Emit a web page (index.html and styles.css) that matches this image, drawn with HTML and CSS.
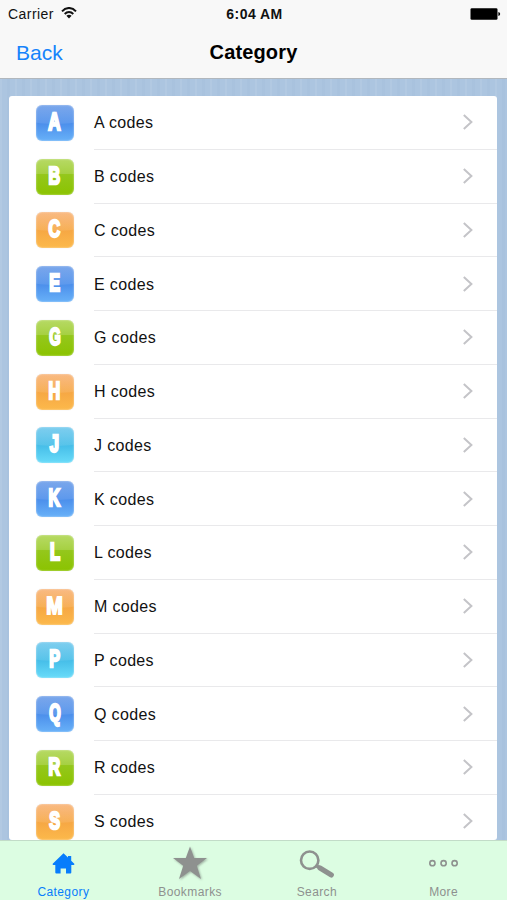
FILE: index.html
```html
<!DOCTYPE html>
<html lang="en">
<head>
<meta charset="utf-8">
<title>Category</title>
<link rel="stylesheet" href="styles.css">
</head>
<body>
<div class="app">
  <header class="header">
    <div class="status">
      <div class="carrier"><span>Carrier</span>
        <svg width="16" height="12" viewBox="0 0 16 12" fill="none" stroke="#111" stroke-width="1.9"><path d="M1 4.3C5-.2 11-.2 15 4.3M3.7 7C6.2 4.4 9.8 4.4 12.3 7"/><path d="M8 11.6 5.4 8.8Q8 6.7 10.6 8.8Z" fill="#111" stroke="none"/></svg>
      </div>
      <div class="clock">6:04 AM</div>
      <svg class="battery" width="31" height="12" viewBox="0 0 31 12"><rect x=".5" y=".3" width="27" height="11.4" rx="1.3"/><path d="M28.4 4Q30.2 4.3 30.2 6T28.4 8Z"/></svg>
    </div>
    <nav class="nav"><a class="back">Back</a><h1 class="title">Category</h1><span></span></nav>
  </header>
  <main class="main">
    <ul class="list" id="codes"></ul>
  </main>
  <footer class="tabs">
    <div class="tab active">
      <div class="icon"><svg width="40" height="36" viewBox="0 0 40 36" fill="currentColor"><path d="M20.5 8.2 9.7 18.8Q9.3 20 10.5 20H12.3V27.5Q12.3 28.5 13.3 28.5H17.6V23.6H23V28.5H27.3Q28.3 28.5 28.3 27.5V20H30.5Q31.7 20 31.3 18.8L28.2 15.7V11H25V12.6Z"/></svg></div>
      <span>Category</span>
    </div>
    <div class="tab">
      <div class="icon"><svg class="star" width="40" height="36" viewBox="0 0 40 36" fill="currentColor"><path d="M20 1.5 24.2 13H37L26.8 20.8 31 34 20 26 9 34 13.2 20.8 3 13H15.8Z"/></svg></div>
      <span>Bookmarks</span>
    </div>
    <div class="tab">
      <div class="icon"><svg width="40" height="36" viewBox="0 0 40 36" fill="none" stroke="currentColor"><circle cx="12.7" cy="15.2" r="8.7" stroke-width="2.6"/><path d="M19 20.5 23 23" stroke-width="3.4"/><path d="M23 23 34.4 30" stroke-width="5" stroke-linecap="round"/></svg></div>
      <span>Search</span>
    </div>
    <div class="tab">
      <div class="icon"><svg width="40" height="36" viewBox="0 0 40 36" fill="none" stroke="currentColor" stroke-width="1.6"><circle cx="8.4" cy="18.2" r="2.6"/><circle cx="19.6" cy="18.2" r="2.6"/><circle cx="30.6" cy="18.2" r="2.6"/></svg></div>
      <span>More</span>
    </div>
  </footer>
</div>
<script src="script.js"></script>
</body>
</html>
```
FILE: script.js
```js
const rows = [
  ["A", "blue"], ["B", "green"], ["C", "orange"], ["E", "blue"], ["G", "green"],
  ["H", "orange"], ["J", "cyan"], ["K", "blue"], ["L", "green"], ["M", "orange"],
  ["P", "cyan"], ["Q", "blue"], ["R", "green"], ["S", "orange"]
];
document.getElementById("codes").innerHTML = rows.map(([letter, color]) => `
  <li class="row">
    <div class="tile ${color}"><span class="letter letter-${letter}">${letter}</span></div>
    <div class="cell"><span class="label">${letter} codes</span>
      <svg width="12" height="18" viewBox="0 0 12 18" fill="none" stroke="#c4c4c8" stroke-width="2"><path d="M1.8 2 9.4 9 1.8 16"/></svg>
    </div>
  </li>`).join("");
```
FILE: styles.css
```css
* { box-sizing: border-box; }
body { margin: 0; font-family: "Liberation Sans", Arial, sans-serif; color: #111; }
.app { width: 507px; height: 900px; display: flex; flex-direction: column; overflow: hidden; }
.header { height: 79px; flex: none; background: #f8f8f8; border-bottom: 1px solid #b1b7bd; }
.status { height: 27px; display: grid; grid-template-columns: 1fr auto 1fr; align-items: center; padding: 1px 6px 0 8px; font-size: 14px; }
.carrier { display: flex; align-items: center; gap: 7px; letter-spacing: .45px; }
.carrier svg { margin-top: -3px; }
.clock { font-weight: bold; letter-spacing: .45px; }
.battery { justify-self: end; }
.nav { height: 51px; display: grid; grid-template-columns: 1fr auto 1fr; align-items: center; padding: 0 16px; }
.back { color: #1683fb; font-size: 21px; }
.title { margin: 0; font-size: 20px; letter-spacing: .15px; color: #000; }
.main {
  flex: 1; min-height: 0; padding: 17px 10px 0 9px; overflow: hidden;
  background: repeating-linear-gradient(90deg, rgba(255,255,255,.07) 0 2px, transparent 2px 7px, rgba(70,110,160,.03) 7px 10px, transparent 10px 15px), #acc5e0;
}
.list { margin: 0; padding: 0; height: 744px; overflow: hidden; list-style: none; background: #fff; border-radius: 3px; }
.row { height: 53.75px; display: flex; align-items: center; padding-left: 26.5px; }
.cell { flex: 1; align-self: stretch; margin-left: 20px; padding-right: 23px; display: flex; align-items: center; justify-content: space-between; border-bottom: 1.5px solid #e9e9eb; font-size: 16px; letter-spacing: .35px; }
.label { padding-top: 2px; }
.row:last-child .cell { border-color: transparent; }
.tile { position: relative; width: 38.5px; height: 36px; border-radius: 6px; overflow: hidden; display: flex; align-items: center; justify-content: center; box-shadow: inset 0 0 2px rgba(255,255,255,.65), 0 0 1px rgba(100,130,160,.3); }
.tile::before { content: ""; position: absolute; left: -8px; right: -8px; top: -18px; height: 37px; border-radius: 0 0 50% 50% / 0 0 14% 14%; background: linear-gradient(rgba(255,255,255,.1), rgba(255,255,255,.1)); }
.green::before { border-radius: 0; height: 33px; background: rgba(255,255,255,.16); }
.blue { background: linear-gradient(#6c9de9, #4b8eeb 50%, #68b1f8); }
.green { background: linear-gradient(#a9d347, #94c71b 45%, #8bc300); }
.orange { background: linear-gradient(#f8b275, #f6a744 50%, #fcb94b); }
.cyan { background: linear-gradient(#70c8ed, #45bde8 50%, #68dbf9); }
.letter { position: relative; color: #fff; font-size: 23px; line-height: 34px; font-weight: bold; -webkit-text-stroke: 2.4px #fff; transform: translateY(-1px) scaleX(.7); }
.letter-J, .letter-L { transform: translateY(-1px) scaleX(.72); }
.letter-A { transform: translateY(-1px) scaleX(.74); }
.letter-Q, .letter-G { transform: translateY(-1px) scaleX(.64); }
.letter-M { transform: translateY(-1px) scaleX(.86); -webkit-text-stroke-width: 1.8px; }
.tabs { height: 60px; flex: none; display: grid; grid-template-columns: repeat(4, 1fr); background: #dcfde2; border-top: 1px solid #c2dcc8; }
.tab { display: flex; flex-direction: column; align-items: center; color: #8e918f; font-size: 12px; letter-spacing: .4px; line-height: 14px; white-space: nowrap; }
.icon { height: 36px; margin: 4px 0; }
.icon svg { display: block; }
.star { filter: drop-shadow(1px 1px 1px rgba(80,80,80,.45)); }
.active { color: #087dfc; }
```
